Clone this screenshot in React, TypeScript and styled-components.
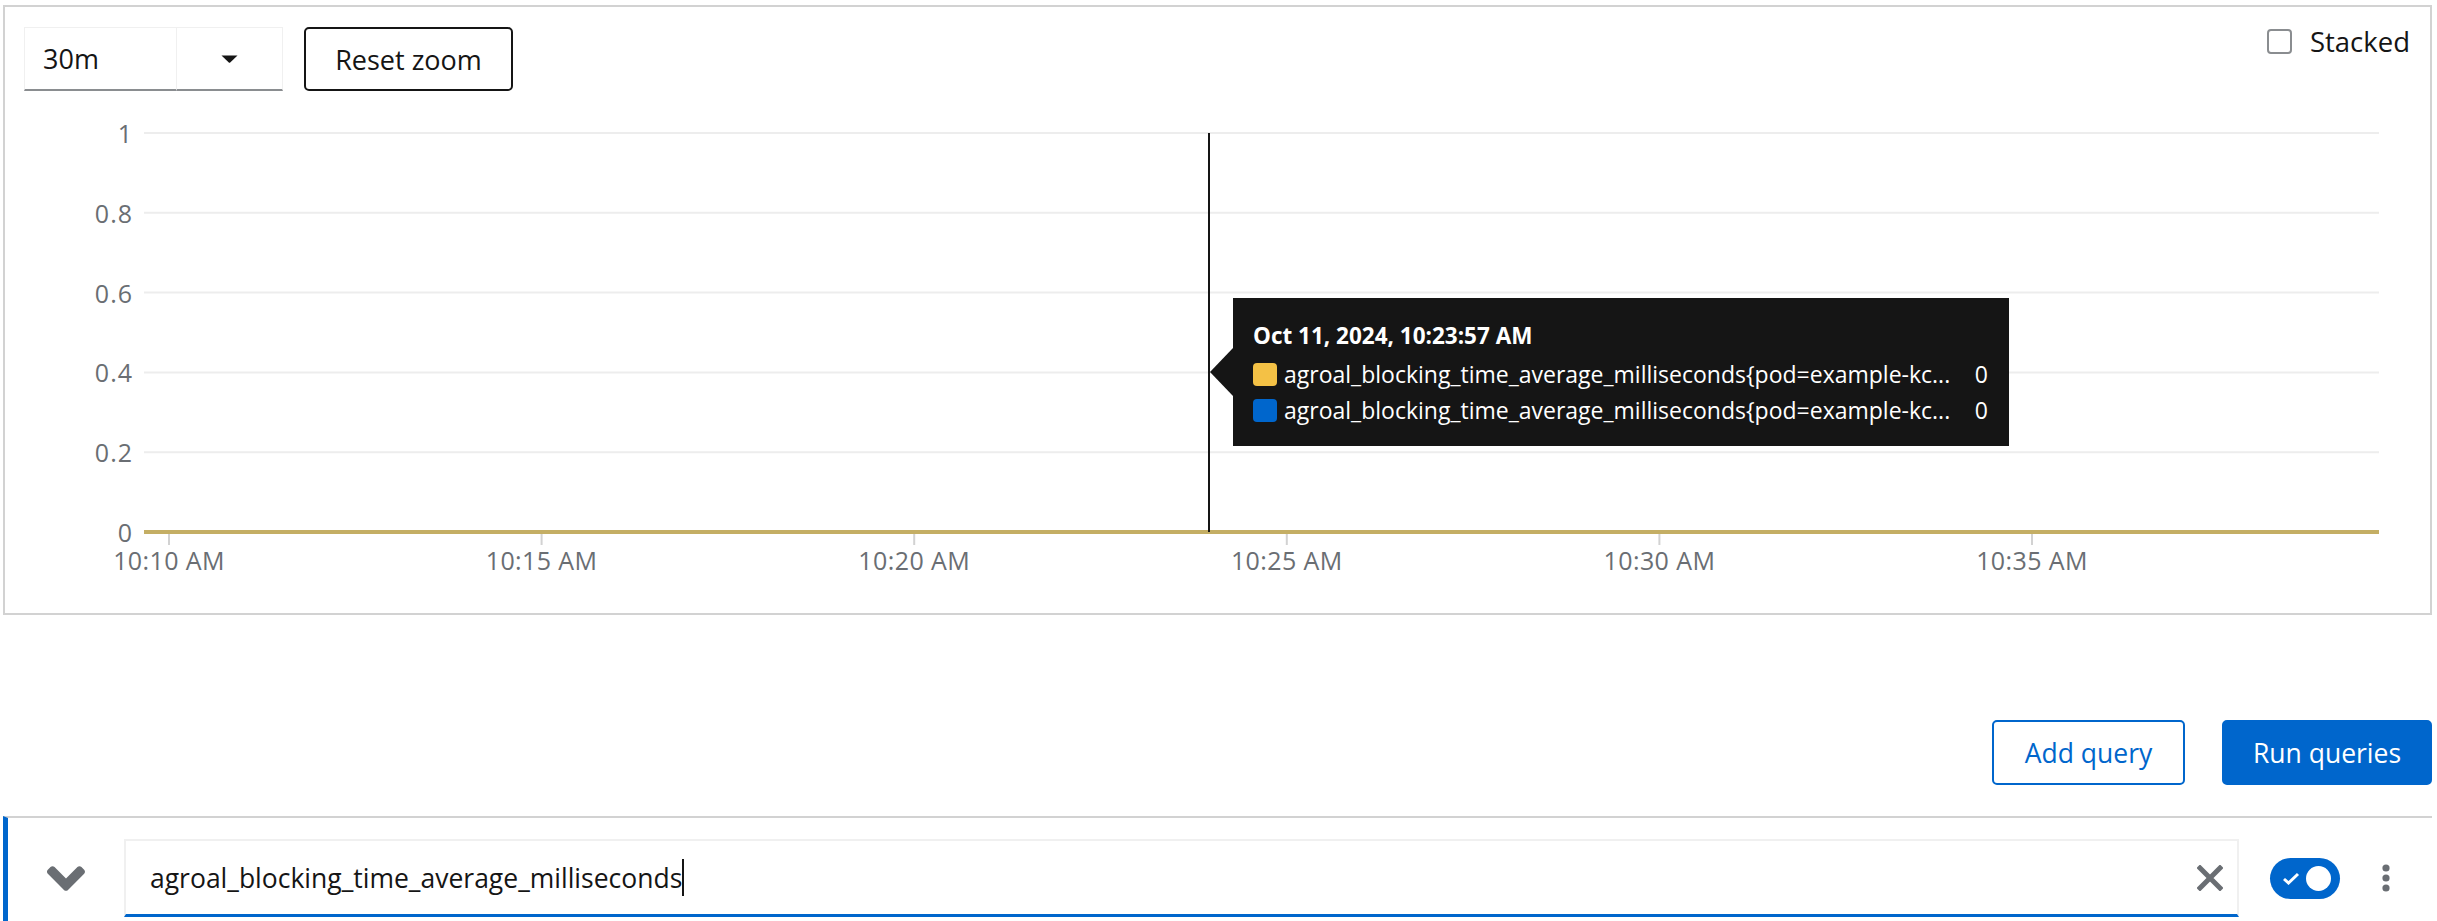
import React from "react";
import styled, { createGlobalStyle } from "styled-components";

const GlobalStyle = createGlobalStyle`
  html, body { margin: 0; padding: 0; background: #fff; }
  body { font-family: "Open Sans", "Liberation Sans", sans-serif; color: #151515; }
  * { box-sizing: border-box; }
`;

const Page = styled.div`
  width: 2437px;
  padding: 5px 5px 0 3px;
  display: flex;
  flex-direction: column;
`;

const Card = styled.section`
  height: 610px;
  border: 2px solid #d2d2d2;
  display: flex;
  flex-direction: column;
`;

const Toolbar = styled.div`
  display: flex;
  align-items: flex-start;
  height: 84px;
  padding: 20px 20px 0 19px;
`;

const Select = styled.div`
  display: flex;
  height: 64px;
`;

const SelectValue = styled.div`
  width: 153px;
  height: 100%;
  display: flex;
  align-items: center;
  padding-left: 18px;
  font-size: 27px;
  border: 1px solid #f0f0f0;
  border-bottom: 2px solid #8a8d90;
`;

const SelectToggle = styled.button`
  width: 106px;
  height: 100%;
  display: flex;
  align-items: center;
  justify-content: center;
  background: #fff;
  border: 1px solid #f0f0f0;
  border-left: none;
  border-bottom: 2px solid #8a8d90;
  padding: 0;
`;

const ResetButton = styled.button`
  margin-left: 21px;
  width: 209px;
  height: 64px;
  border: 2px solid #151515;
  border-radius: 5px;
  background: #fff;
  font-family: inherit;
  font-size: 27px;
  color: #151515;
`;

const Spacer = styled.div`
  flex: 1;
`;

const StackedLabel = styled.label`
  display: flex;
  align-items: center;
  gap: 18px;
  margin-top: 2px;
  height: 25px;
  font-size: 27.5px;
  color: #151515;
`;

const CheckBox = styled.span`
  width: 25px;
  height: 25px;
  border: 2px solid #8a8d90;
  border-radius: 4px;
  background: #fff;
`;

const ChartArea = styled.div`
  position: relative;
  flex: 1;
`;

const ChartSvg = styled.svg`
  display: block;
  font-family: "Open Sans", "Liberation Sans", sans-serif;
`;

const Tooltip = styled.div`
  position: absolute;
  left: 1228px;
  top: 207px;
  width: 776px;
  height: 148px;
  background: #151515;
  color: #fff;
  padding: 21px 21px 0 20px;
  &::before {
    content: "";
    position: absolute;
    left: -23px;
    top: 50px;
    border-right: 23px solid #151515;
    border-top: 24px solid transparent;
    border-bottom: 24px solid transparent;
  }
`;

const TooltipTitle = styled.div`
  font-size: 22.5px;
  font-weight: 700;
  line-height: 33px;
  margin-bottom: 4px;
`;

const TooltipRow = styled.div`
  display: flex;
  align-items: center;
  height: 36px;
  font-size: 23px;
`;

const Swatch = styled.span<{ $color: string }>`
  flex: none;
  width: 24px;
  height: 23px;
  border-radius: 4px;
  background: ${(p) => p.$color};
  margin-right: 7px;
`;

const SeriesName = styled.span`
  flex: 1;
  white-space: nowrap;
  overflow: hidden;
`;

const SeriesValue = styled.span`
  margin-left: 16px;
`;

const ActionsRow = styled.div`
  display: flex;
  justify-content: flex-end;
  gap: 37px;
  margin-top: 105px;
`;

const ActionButton = styled.button<{ $primary?: boolean; $width: number }>`
  width: ${(p) => p.$width}px;
  height: 65px;
  border-radius: 5px;
  font-family: inherit;
  font-size: 26.5px;
  border: 2px solid #0066cc;
  background: ${(p) => (p.$primary ? "#0066cc" : "#fff")};
  color: ${(p) => (p.$primary ? "#fff" : "#0066cc")};
`;

const QueryRow = styled.div`
  margin-top: 31px;
  display: flex;
  align-items: center;
  border-top: 2px solid #d2d2d2;
  border-left: 5px solid #0066cc;
  padding: 21px 0 10px 0;
`;

const ExpandButton = styled.button`
  width: 116px;
  height: 40px;
  display: flex;
  align-items: center;
  justify-content: center;
  background: none;
  border: none;
  padding: 0;
`;

const QueryInput = styled.div`
  flex: 1;
  height: 78px;
  display: flex;
  align-items: center;
  border: 2px solid #f0f0f0;
  border-bottom: 3px solid #0066cc;
  padding: 0 14px 0 24px;
  font-size: 26.5px;
  color: #151515;
`;

const QueryText = styled.span`
  flex: 1;
  display: flex;
  align-items: center;
`;

const TextCaret = styled.span`
  display: inline-block;
  width: 2px;
  height: 37px;
  background: #151515;
`;

const ClearButton = styled.button`
  background: none;
  border: none;
  padding: 0;
  display: flex;
  align-items: center;
`;

const Switch = styled.span`
  margin-left: 31px;
  width: 70px;
  height: 41px;
  border-radius: 21px;
  background: #0066cc;
  display: flex;
  align-items: center;
  padding: 0 9px 0 12px;
  justify-content: space-between;
`;

const Knob = styled.span`
  width: 25px;
  height: 25px;
  border-radius: 50%;
  background: #fff;
`;

const KebabButton = styled.button`
  width: 92px;
  height: 40px;
  background: none;
  border: none;
  padding: 0;
  display: flex;
  align-items: center;
  justify-content: center;
`;

const yTicks = ["0", "0.2", "0.4", "0.6", "0.8", "1"];
const xTicks = ["10:10 AM", "10:15 AM", "10:20 AM", "10:25 AM", "10:30 AM", "10:35 AM"];
const baseY = 532;
const stepY = 79.8;
const baseX = 169;
const stepX = 372.6;

function Chart() {
  return (
    <ChartSvg width={2425} height={522}>
      <g transform="translate(-5,-91)">
        {yTicks.map((t, i) => {
          const y = baseY - i * stepY;
          return (
            <g key={t}>
              {i > 0 && <line x1={144} x2={2379} y1={y} y2={y} stroke="#ededed" strokeWidth={2} />}
              <text x={133} y={y + 10} textAnchor="end" fontSize={25} letterSpacing={1} fill="#6a6e73">
                {t}
              </text>
            </g>
          );
        })}
        {xTicks.map((t, i) => {
          const x = baseX + i * stepX;
          return (
            <g key={t}>
              <line x1={x} x2={x} y1={534} y2={545} stroke="#d2d2d2" strokeWidth={2} />
              <text x={x} y={570} textAnchor="middle" fontSize={25} letterSpacing={0.4} fill="#6a6e73">
                {t}
              </text>
            </g>
          );
        })}
        <line x1={144} x2={2379} y1={baseY} y2={baseY} stroke="#c4ae64" strokeWidth={4} />
        <line x1={1209} x2={1209} y1={133} y2={532} stroke="#151515" strokeWidth={2} />
      </g>
    </ChartSvg>
  );
}

export default function App() {
  return (
    <>
      <GlobalStyle />
      <Page>
        <Card>
          <Toolbar>
            <Select>
              <SelectValue>30m</SelectValue>
              <SelectToggle aria-label="Select time range">
                <svg width="17" height="8" viewBox="0 0 17 8">
                  <path d="M0.5 0.5 H16.5 L9.2 7.4 Q8.5 8 7.8 7.4 Z" fill="#151515" />
                </svg>
              </SelectToggle>
            </Select>
            <ResetButton>Reset zoom</ResetButton>
            <Spacer />
            <StackedLabel>
              <CheckBox />
              Stacked
            </StackedLabel>
          </Toolbar>
          <ChartArea>
            <Chart />
            <Tooltip>
              <TooltipTitle>Oct 11, 2024, 10:23:57 AM</TooltipTitle>
              <TooltipRow>
                <Swatch $color="#f4c145" />
                <SeriesName>agroal_blocking_time_average_milliseconds{"{"}pod=example-kc...</SeriesName>
                <SeriesValue>0</SeriesValue>
              </TooltipRow>
              <TooltipRow>
                <Swatch $color="#0066cc" />
                <SeriesName>agroal_blocking_time_average_milliseconds{"{"}pod=example-kc...</SeriesName>
                <SeriesValue>0</SeriesValue>
              </TooltipRow>
            </Tooltip>
          </ChartArea>
        </Card>
        <ActionsRow>
          <ActionButton $width={193}>Add query</ActionButton>
          <ActionButton $primary $width={210}>Run queries</ActionButton>
        </ActionsRow>
        <QueryRow>
          <ExpandButton aria-label="Collapse">
            <svg width="38" height="25" viewBox="0 153 320 207">
              <path
                d="M143 352.3L7 216.3c-9.4-9.4-9.4-24.6 0-33.9l22.6-22.6c9.4-9.4 24.6-9.4 33.9 0l96.4 96.4 96.4-96.4c9.4-9.4 24.6-9.4 33.9 0l22.6 22.6c9.4 9.4 9.4 24.6 0 33.9l-136 136c-9.2 9.4-24.4 9.4-33.8 0z"
                fill="#6a6e73"
              />
            </svg>
          </ExpandButton>
          <QueryInput>
            <QueryText>
              agroal_blocking_time_average_milliseconds
              <TextCaret />
            </QueryText>
            <ClearButton aria-label="Clear">
              <svg width="26" height="26" viewBox="0 0 26 26">
                <path d="M3 3 L23 23 M23 3 L3 23" stroke="#6a6e73" strokeWidth="5" strokeLinecap="square" />
              </svg>
            </ClearButton>
          </QueryInput>
          <Switch>
            <svg width="18" height="13" viewBox="0 0 18 13">
              <polyline points="2,7 6.5,11 16,2" fill="none" stroke="#fff" strokeWidth="3" />
            </svg>
            <Knob />
          </Switch>
          <KebabButton aria-label="Actions">
            <svg width="8" height="28" viewBox="0 0 8 28">
              <circle cx="4" cy="4" r="3.6" fill="#6a6e73" />
              <circle cx="4" cy="14" r="3.6" fill="#6a6e73" />
              <circle cx="4" cy="24" r="3.6" fill="#6a6e73" />
            </svg>
          </KebabButton>
        </QueryRow>
      </Page>
    </>
  );
}
